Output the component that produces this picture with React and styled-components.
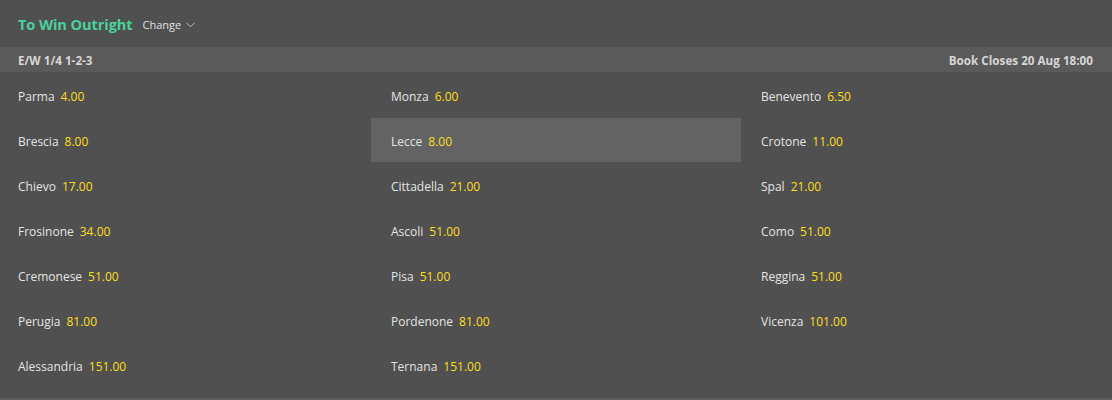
import React from 'react';
import styled, { createGlobalStyle } from 'styled-components';

const GlobalStyle = createGlobalStyle`
    html, body {
        margin: 0;
        padding: 0;
        background: #505050;
    }
    body {
        font-family: "Open Sans", "DejaVu Sans", sans-serif;
    }
`;

const Wrapper = styled.div`
    width: 1112px;
    height: 400px;
    background: #505050;
    border-bottom: 2px solid #5e5e5e;
    box-sizing: border-box;
`;

const Header = styled.div`
    height: 47px;
    display: flex;
    align-items: center;
    padding: 0 18px;
    gap: 10px;
`;

const Title = styled.span`
    color: #4ad19c;
    font-weight: 700;
    font-size: 14.6px;
    letter-spacing: -0.1px;
`;

const Change = styled.span`
    display: flex;
    align-items: center;
    gap: 5px;
    color: #e0e0e0;
    font-size: 11px;
    padding-top: 2px;
`;

const SubHeader = styled.div`
    height: 25px;
    background: #5a5a5a;
    display: flex;
    align-items: center;
    justify-content: space-between;
    padding: 0 19px 0 18px;
    color: #d6d6d6;
    font-size: 11.7px;
    font-weight: 700;
`;

const Grid = styled.div`
    display: grid;
    grid-template-columns: 371px 370px 1fr;
    grid-auto-rows: 45px;
    padding-top: 1px;
`;

const Cell = styled.div`
    display: flex;
    align-items: center;
    gap: 6px;
    padding-left: ${p => (p.first ? '18px' : '20px')};
    padding-top: 2px;
    margin-bottom: ${p => (p.active ? '1px' : '0')};
    background: ${p => (p.active ? '#636363' : 'transparent')};
    font-size: 12px;
`;

const Name = styled.span`
    color: #e4e4e4;
`;

const Odds = styled.span`
    color: #ffdf1b;
`;

const rows = [
    [['Parma', '4.00'], ['Monza', '6.00'], ['Benevento', '6.50']],
    [['Brescia', '8.00'], ['Lecce', '8.00', true], ['Crotone', '11.00']],
    [['Chievo', '17.00'], ['Cittadella', '21.00'], ['Spal', '21.00']],
    [['Frosinone', '34.00'], ['Ascoli', '51.00'], ['Como', '51.00']],
    [['Cremonese', '51.00'], ['Pisa', '51.00'], ['Reggina', '51.00']],
    [['Perugia', '81.00'], ['Pordenone', '81.00'], ['Vicenza', '101.00']],
    [['Alessandria', '151.00'], ['Ternana', '151.00'], null],
];

const Chevron = () => (
    <svg width="9" height="6" viewBox="0 0 9 6" fill="none">
        <path d="M0.5 0.8 L4.5 4.8 L8.5 0.8" stroke="#bdbdbd" strokeWidth="1" />
    </svg>
);

const App = () => {
    return (
        <Wrapper>
            <GlobalStyle />
            <Header>
                <Title>To Win Outright</Title>
                <Change>Change <Chevron /></Change>
            </Header>
            <SubHeader>
                <span>E/W 1/4 1-2-3</span>
                <span>Book Closes 20 Aug 18:00</span>
            </SubHeader>
            <Grid>
                {rows.map((row, i) =>
                    row.map((c, j) =>
                        c ? (
                            <Cell key={i + '-' + j} first={j === 0} active={c[2]}>
                                <Name>{c[0]}</Name>
                                <Odds>{c[1]}</Odds>
                            </Cell>
                        ) : (
                            <Cell key={i + '-' + j} />
                        )
                    )
                )}
            </Grid>
        </Wrapper>
    );
};

export default App;
